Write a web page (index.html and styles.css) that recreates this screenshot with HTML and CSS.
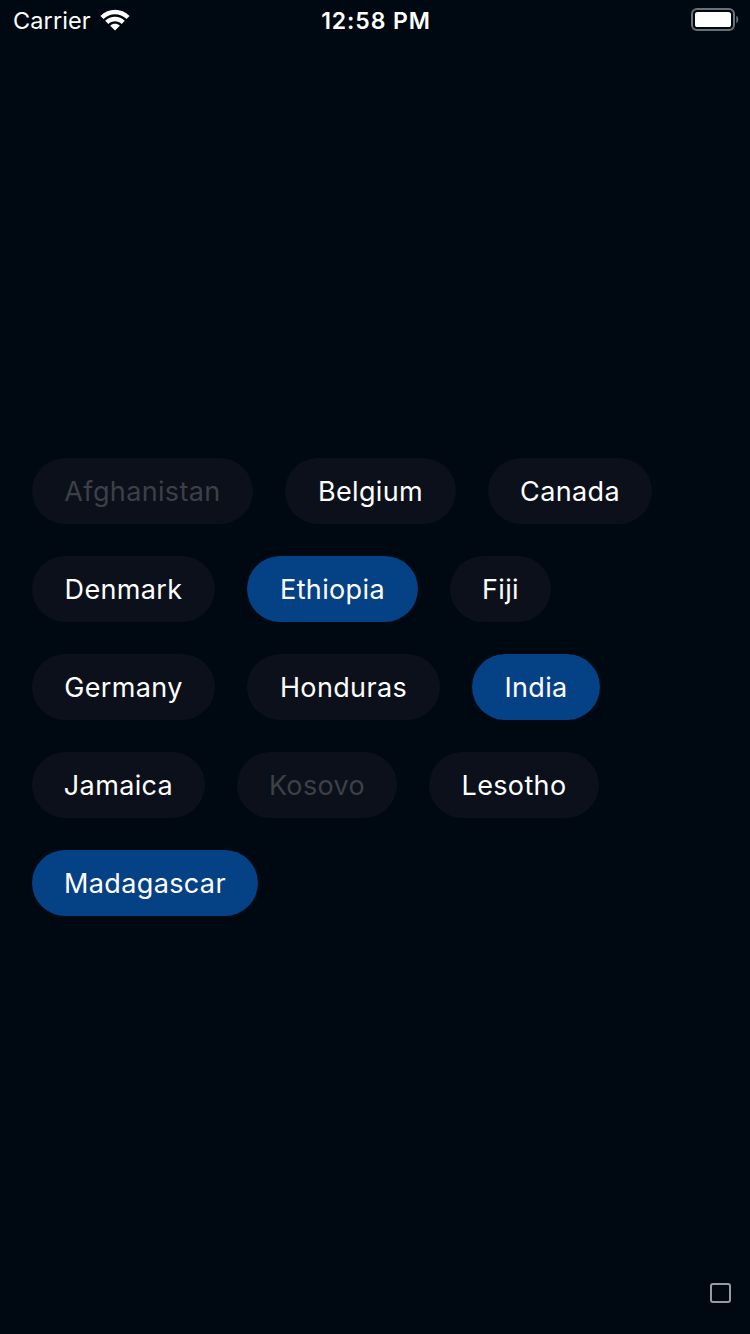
FILE: index.html
```html
<!DOCTYPE html>
<html lang="en">
<head>
<meta charset="utf-8">
<title>Countries</title>
<link rel="stylesheet" href="styles.css">
</head>
<body>
<div class="screen">
  <header class="status">
    <div class="status-left">
      <span class="carrier">Carrier</span>
      <svg class="wifi" width="30" height="22" viewBox="0 0 30 22">
        <path d="M0.4 6.9C8.5-1.2 21.5-1.2 29.6 6.9L26.5 10C20.1 3.6 9.9 3.6 3.5 10Z"/>
        <path d="M5.2 11.8C10.7 6.4 19.3 6.4 24.8 11.8L21.7 14.9C17.9 11.3 12.1 11.3 8.3 14.9Z"/>
        <path d="M10.2 16.7C12.9 14.2 17.1 14.2 19.8 16.7L15 21.6Z"/>
      </svg>
    </div>
    <span class="time">12:58 PM</span>
    <svg class="battery" width="48" height="24" viewBox="0 0 48 24">
      <rect class="battery-case" x="1" y="1" width="42" height="21" rx="5"/>
      <rect class="battery-fill" x="4" y="4" width="36" height="15" rx="2.6"/>
      <path class="battery-cap" d="M45.3 7.8C47.9 9 47.9 14 45.3 15.2Z"/>
    </svg>
  </header>
  <main class="chips">
    <button class="chip w221 disabled"><span>Afghanistan</span></button>
    <button class="chip w171"><span>Belgium</span></button>
    <button class="chip w164"><span>Canada</span></button>
    <button class="chip w183"><span>Denmark</span></button>
    <button class="chip w171 selected"><span>Ethiopia</span></button>
    <button class="chip w101"><span>Fiji</span></button>
    <button class="chip w183"><span>Germany</span></button>
    <button class="chip w193"><span>Honduras</span></button>
    <button class="chip w128 selected"><span>India</span></button>
    <button class="chip w173"><span>Jamaica</span></button>
    <button class="chip w160 disabled"><span>Kosovo</span></button>
    <button class="chip w170"><span>Lesotho</span></button>
    <button class="chip w226 selected"><span>Madagascar</span></button>
  </main>
  <footer class="footer"><span class="square"></span></footer>
</div>
</body>
</html>
```
FILE: styles.css
```css
* { box-sizing: border-box; }
body { margin: 0; background: #000811; }
.screen {
  width: 750px;
  height: 1334px;
  display: flex;
  flex-direction: column;
  background: #000811;
  color: #fff;
  font-family: Inter, "Liberation Sans", sans-serif;
  overflow: hidden;
}
.status {
  height: 40px;
  display: grid;
  grid-template-columns: 1fr auto 1fr;
  align-items: center;
  padding: 0 11px 0 13px;
  font-size: 23.5px;
}
.status-left { display: flex; align-items: center; gap: 9px; }
.carrier { letter-spacing: 0.1px; line-height: 38px; padding-top: 2px; }
.wifi { fill: #fff; }
.time { font-weight: 600; font-size: 23px; letter-spacing: 0.9px; line-height: 38px; padding-top: 2px; }
.battery { justify-self: end; }
.battery-case { fill: none; stroke: #6b7075; stroke-width: 2; }
.battery-fill { fill: #fff; }
.battery-cap { fill: #6b7075; }
.chips {
  flex: 1;
  display: flex;
  flex-wrap: wrap;
  align-content: flex-start;
  gap: 32px;
  padding: 418px 32px 0;
}
.chip {
  height: 66px;
  padding: 2px 0 0;
  border: 0;
  border-radius: 33px;
  background: #0b101a;
  color: #fff;
  font: 400 27px/64px Inter, "Liberation Sans", sans-serif;
  letter-spacing: 0.36px;
  white-space: nowrap;
}
.selected { background: #054185; }
.disabled { color: #3c4047; }
.w101 { width: 101px; }
.w128 { width: 128px; }
.w160 { width: 160px; }
.w164 { width: 164px; }
.w170 { width: 170px; }
.w171 { width: 171px; }
.w173 { width: 173px; }
.w183 { width: 183px; }
.w193 { width: 193px; }
.w221 { width: 221px; }
.w226 { width: 226px; }
.footer {
  display: flex;
  justify-content: flex-end;
  padding: 0 19px 31px 0;
}
.square {
  width: 21px;
  height: 20px;
  border: 2px solid #999b9e;
  border-radius: 3px;
}
```
